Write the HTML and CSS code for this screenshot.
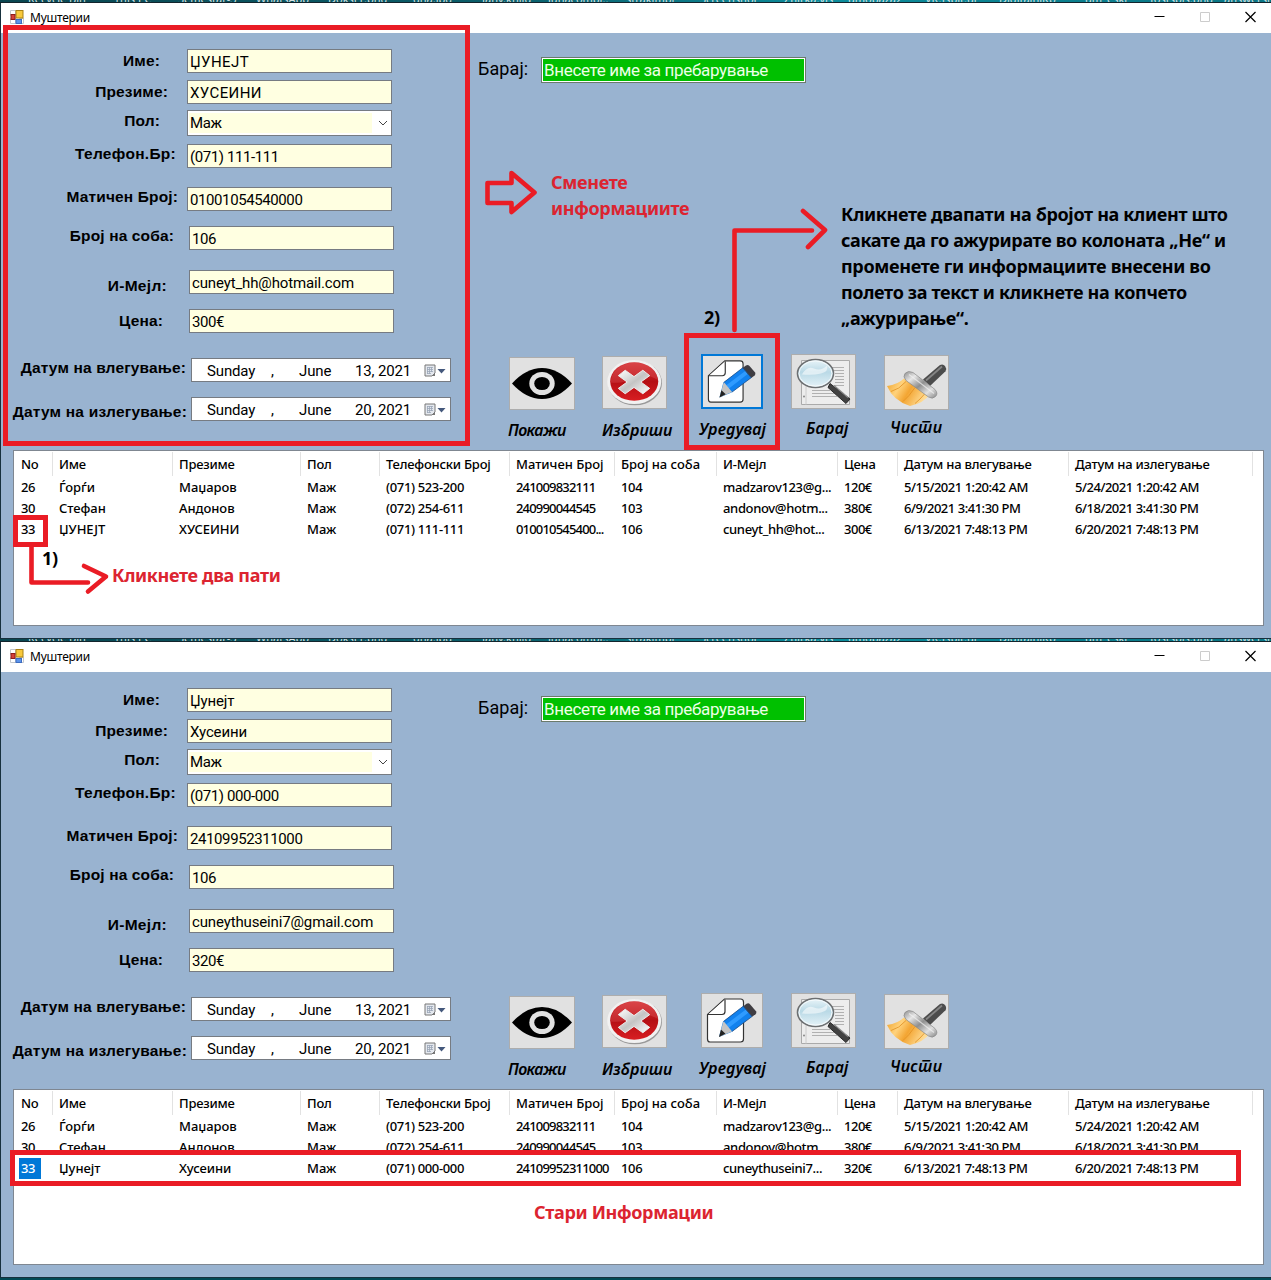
FILE: index.html
```
<!DOCTYPE html>
<html lang="mk">
<head>
<meta charset="utf-8">
<title>Муштерии</title>
<link rel="stylesheet" href="styles.css">
</head>
<body>
<svg class="defs" width="0" height="0" aria-hidden="true">
  <defs>
    <linearGradient id="silver" x1="0" y1="0" x2="1" y2="1"><stop offset="0" stop-color="#fff"/><stop offset=".5" stop-color="#c4c4c4"/><stop offset="1" stop-color="#fff"/></linearGradient>
    <linearGradient id="red" x1="0" y1="0" x2="0" y2="1"><stop offset="0" stop-color="#d63a3e"/><stop offset=".5" stop-color="#b50f14"/><stop offset="1" stop-color="#d81e22"/></linearGradient>
    <linearGradient id="glass" x1="0" y1="0" x2="0" y2="1"><stop offset="0" stop-color="#eaf5f9"/><stop offset=".45" stop-color="#b9d9e6"/><stop offset="1" stop-color="#e6f3f8"/></linearGradient>
    <linearGradient id="bristle" x1="0" y1="0" x2="1" y2=".4"><stop offset="0" stop-color="#ef9f22"/><stop offset=".35" stop-color="#ffd27c"/><stop offset=".6" stop-color="#f3a532"/><stop offset="1" stop-color="#ffdc95"/></linearGradient>
    <linearGradient id="steel" x1="0" y1="0" x2="1" y2="1"><stop offset="0" stop-color="#8c8c8c"/><stop offset=".25" stop-color="#e6e6e6"/><stop offset=".5" stop-color="#8f8f8f"/><stop offset=".75" stop-color="#e0e0e0"/><stop offset="1" stop-color="#868686"/></linearGradient>
  </defs>
  <symbol id="app" viewBox="0 0 14 14">
    <path d="M.5.5h5v5h-5zM.5 8.5h5v5h-5zM9.500 8.500h4v5h-4z" fill="#fff" stroke="#c3c7cc"/>
    <rect x="6" y=".5" width="7" height="7.500" fill="#f8c93c" stroke="#a98113"/>
    <rect x="1" y="4.500" width="4" height="5" fill="#d4403a" stroke="#8e1c18"/>
    <rect x="6" y="9.500" width="5.500" height="4" fill="#5b93ea" stroke="#3d6cc0"/>
  </symbol>
  <symbol id="calendar" viewBox="0 0 22 13">
    <path d="M1 1h10v8l-3 3H1z" fill="#e4e8ee" stroke="#777"/>
    <path d="M3 3.500h6M3 5.500h6M3 7.500h6M3 9.500h4M3.500 3v7M5.500 3v7M7.500 3v5" stroke="#9aa6b8" stroke-width=".8"/>
    <path d="M11 9v3H8z" fill="#777"/>
    <path d="M13.500 5h8L17.500 9.500z" fill="#44587c"/>
  </symbol>
  <symbol id="eye" viewBox="0 0 64 51">
    <path d="M2 25.500Q16 10 32 10T62 25.500Q48 41 32 41T2 25.500z"/>
    <ellipse cx="32" cy="25.500" rx="12.700" ry="11.500" fill="#e1e1e1"/>
    <ellipse cx="32" cy="25.500" rx="7.800" ry="6.600"/>
  </symbol>
  <symbol id="remove" viewBox="0 0 64 52">
    <ellipse cx="32.500" cy="26.500" rx="27.500" ry="22.800" fill="#999"/>
    <ellipse cx="31.700" cy="25.500" rx="27.500" ry="22.500" fill="#f1f1f1"/>
    <ellipse cx="31.700" cy="25" rx="24.500" ry="19.700" fill="url(#red)"/>
    <path d="M7.500 26Q9 8 32 5.500q21 1 24 18-14-8-24-2T7.500 26z" fill="#e2595c" opacity=".35"/>
    <path d="M22.500 13.500l9 6.500 9-6.500 7 5.500-9 6.500 9 6.500-7 5.500-9-6.500-9 6.500-7-5.500 9-6.500-9-6.500z" fill="url(#silver)" stroke="#ececec" stroke-linejoin="round"/>
  </symbol>
  <symbol id="edit" viewBox="0 0 60 53">
    <path d="M22.500 5h16q3 0 3 3v37q0 3-3 3H8q-2.500 0-2.500-3V20.500z" fill="#fff" stroke="#333" stroke-width="1.200"/>
    <path d="M23 5.500v12q0 3-3 3H6" fill="#fff" stroke="#333" stroke-width="1.200"/>
    <path d="M17 43l4-15.500L41.500 12l8.500 10.500L29.500 38z" fill="#1181ee"/>
    <path d="M24 30.500L44.500 15l2.500 3.200L26.500 34z" fill="#2f9bff"/>
    <path d="M17 43l4.500-16 8.500 10.500z" fill="#c4c4c4"/>
    <path d="M17 43l2-7.500 4.500 4.300z" fill="#222"/>
    <path d="M41 12.500l3.500-2.700q2-1.300 3.700.6l5.800 6.800q1 1.800-.5 3L50 22.800z" fill="#3f3d42"/>
    <path d="M21.500 27.500L41.500 12 50 22.500 30 37.500" fill="none" stroke="#1e4e86" stroke-width=".8"/>
  </symbol>
  <symbol id="find" viewBox="0 0 63 52">
    <path d="M9.500 5h48v44h-48z" fill="#ededed" stroke="#aaa"/>
    <path d="M14 6v43" stroke="#ccc"/>
    <path d="M38 12h14M42 15h10M43 18h9M43 21h9M43 24h9M43 27h9M42 30h10M20 35h18M20 38h22M20 41h25" stroke="#aaa" stroke-width=".9"/>
    <circle cx="12" cy="41" r="1" fill="#888"/>
    <path d="M38 28l20 15.500-4 4.500-18-16z" fill="#414141" stroke="#292929" stroke-linejoin="round"/>
    <path d="M42 30l14 12" stroke="#8a8a8a" stroke-width="1.200"/>
    <ellipse cx="23.500" cy="18" rx="18" ry="14" fill="url(#glass)" stroke="#6d6f71" stroke-width="1.600"/>
    <ellipse cx="23.500" cy="18" rx="16.500" ry="12.600" fill="none" stroke="#f6fbfd"/>
    <path d="M10 19q5-9 12-6t13-3q2 6-6 8t-19 1z" fill="#fff" opacity=".55"/>
  </symbol>
  <symbol id="broom" viewBox="0 0 63 52">
    <path d="M38 23L55 8.500q3-1.500 5 1t.5 5.200L45 29.500z" fill="#4c4c4c"/>
    <path d="M41 24L57 10" stroke="#858585" stroke-width="1.800"/>
    <path d="M19 22Q13 28 2 29.500 8 44 25 49.500q14-3 20-12z" fill="url(#bristle)"/>
    <path d="M21 25Q14 33 6 35M30 31q-6 9-12 14M40 37q-5 6-10 10" fill="none" stroke="#e08f22" stroke-width=".8"/>
    <path d="M20 17q3-3.500 8-1l22 17q3.500 4 .5 7t-7 .5L21 24q-3.500-4-1-7z" fill="url(#steel)" stroke="#888" stroke-width=".7"/>
    <path d="M24 18l25 19" stroke="#f2f2f2" stroke-width="1.200" opacity=".7"/>
  </symbol>
  <symbol id="captions" viewBox="0 0 104 12">
    <path d="M.5 5.500h10" stroke="#000"/>
    <path d="M46.500 1.500h9v9h-9z" fill="none" stroke="#ccc"/>
    <path d="M91.500 1l10 10M101.500 1l-10 10" stroke="#000" stroke-width="1.200"/>
  </symbol>
</svg>

<main class="desktop">
  <section class="window">
    <div class="wallpaper"><span>Recycle Bin</span><span>This PC</span><span>Semestar-3</span><span>WhatsApp</span><span>Dokst1.png</span><span>dna.jpg</span><span>Janv.knjig</span><span>junacompl..</span><span>strakimpl</span><span>Screenshot</span><span>Znirka.vis</span><span>umobaza2</span><span>VR.Ispit.ui</span><span>DigitalniKp</span><span>um_eski</span><span>fostsbls.png</span><span>answersn</span></div>
    <header class="titlebar"><svg class="app-icon"><use href="#app"/></svg><span class="title">Муштерии</span><svg class="captions"><use href="#captions"/></svg></header>
    <div class="client">
      <div class="top">
        <div class="form">
          <div class="row r-name"><label>Име:</label><div class="input caps">ЏУНЕЈТ</div></div>
          <div class="row r-surname"><label>Презиме:</label><div class="input caps">ХУСЕИНИ</div></div>
          <div class="row r-sex"><label>Пол:</label><div class="input combo"><span>Маж</span><svg viewBox="0 0 10 6"><path d="M1 1l4 4 4-4" fill="none" stroke="#444"/></svg></div></div>
          <div class="row r-phone"><label>Телефон.Бр:</label><div class="input digits">(071) 111-111</div></div>
          <div class="row r-id"><label>Матичен Број:</label><div class="input digits">01001054540000</div></div>
          <div class="row r-room"><label>Број на соба:</label><div class="input digits">106</div></div>
          <div class="row r-mail"><label>И-Мејл:</label><div class="input">cuneyt_hh@hotmail.com</div></div>
          <div class="row r-price"><label>Цена:</label><div class="input digits">300€</div></div>
          <div class="row r-in"><label>Датум на влегување:</label><div class="date"><span>Sunday</span><span>,</span><span>June</span><span>13, 2021</span><svg><use href="#calendar"/></svg></div></div>
          <div class="row r-out"><label>Датум на излегување:</label><div class="date"><span>Sunday</span><span>,</span><span>June</span><span>20, 2021</span><svg><use href="#calendar"/></svg></div></div>
        </div>
        <div class="side">
          <div class="search"><label>Барај:</label><div class="query">Внесете име за пребарување</div></div>
          <div class="tools">
            <div class="tool t-show"><div class="btn"><svg><use href="#eye"/></svg></div><span>Покажи</span></div>
            <div class="tool t-delete"><div class="btn"><svg><use href="#remove"/></svg></div><span>Избриши</span></div>
            <div class="tool t-edit"><div class="btn focused"><svg><use href="#edit"/></svg></div><span>Уредувај</span></div>
            <div class="tool t-find"><div class="btn"><svg><use href="#find"/></svg></div><span>Барај</span></div>
            <div class="tool t-clear"><div class="btn"><svg><use href="#broom"/></svg></div><span>Чисти</span></div>
          </div>
        </div>
      </div>
      <div class="list">
        <div class="line head"><span>No</span><span>Име</span><span>Презиме</span><span>Пол</span><span>Телефонски Број</span><span>Матичен Број</span><span>Број на соба</span><span>И-Мејл</span><span>Цена</span><span>Датум на влегување</span><span>Датум на излегување</span></div>
        <div class="line"><span>26</span><span>Ѓорѓи</span><span>Маџаров</span><span>Маж</span><span>(071) 523-200</span><span>241009832111</span><span>104</span><span>madzarov123@g...</span><span>120€</span><span>5/15/2021 1:20:42 AM</span><span>5/24/2021 1:20:42 AM</span></div>
        <div class="line"><span>30</span><span>Стефан</span><span>Андонов</span><span>Маж</span><span>(072) 254-611</span><span>240990044545</span><span>103</span><span>andonov@hotm...</span><span>380€</span><span>6/9/2021 3:41:30 PM</span><span>6/18/2021 3:41:30 PM</span></div>
        <div class="line"><span>33</span><span>ЏУНЕЈТ</span><span>ХУСЕИНИ</span><span>Маж</span><span>(071) 111-111</span><span>010010545400...</span><span>106</span><span>cuneyt_hh@hot...</span><span>300€</span><span>6/13/2021 7:48:13 PM</span><span>6/20/2021 7:48:13 PM</span></div>
      </div>
    </div>
    <svg class="marks" viewBox="0 0 1271 639">
      <g fill="none" stroke="#ea1c25" stroke-width="5">
        <path d="M5.500 27.500h462v416H5.500zM686.500 335.500h91v112h-91zM15.500 517.500h30v27h-30z"/>
        <g stroke-linejoin="round" stroke-linecap="round">
          <path d="M487.500 183h24v-10L534.500 192.500 511.500 212v-9h-24z" stroke-width="4.600"/>
          <path d="M734.500 330V230.500H812M803 211l22 19-17 17" stroke-width="4.600"/>
          <path d="M31.500 547v35.500H88M84 566l22 10.500L88 591.500" stroke-width="4.600"/>
        </g>
      </g>
    </svg>
    <p class="note red n-change">Сменете<br>информациите</p>
    <p class="note n-help">Кликнете двапати на бројот на клиент што<br>сакате да го ажурирате во колоната „Не“ и<br>променете ги информациите внесени во<br>полето за текст и кликнете на копчето<br>„ажурирање“.</p>
    <p class="note n-two">2)</p>
    <p class="note n-one">1)</p>
    <p class="note red n-click">Кликнете два пати</p>
  </section>

  <section class="window">
    <div class="wallpaper"><span>Recycle Bin</span><span>This PC</span><span>Semestar-3</span><span>WhatsApp</span><span>Dokst1.png</span><span>dna.jpg</span><span>Janv.knjig</span><span>junacompl..</span><span>strakimpl</span><span>Screenshot</span><span>Znirka.vis</span><span>umobaza2</span><span>VR.Ispit.ui</span><span>DigitalniKp</span><span>um_eski</span><span>fostsbls.png</span><span>answersn</span></div>
    <header class="titlebar"><svg class="app-icon"><use href="#app"/></svg><span class="title">Муштерии</span><svg class="captions"><use href="#captions"/></svg></header>
    <div class="client">
      <div class="top">
        <div class="form">
          <div class="row r-name"><label>Име:</label><div class="input">Џунејт</div></div>
          <div class="row r-surname"><label>Презиме:</label><div class="input">Хусеини</div></div>
          <div class="row r-sex"><label>Пол:</label><div class="input combo"><span>Маж</span><svg viewBox="0 0 10 6"><path d="M1 1l4 4 4-4" fill="none" stroke="#444"/></svg></div></div>
          <div class="row r-phone"><label>Телефон.Бр:</label><div class="input digits">(071) 000-000</div></div>
          <div class="row r-id"><label>Матичен Број:</label><div class="input digits">24109952311000</div></div>
          <div class="row r-room"><label>Број на соба:</label><div class="input digits">106</div></div>
          <div class="row r-mail"><label>И-Мејл:</label><div class="input">cuneythuseini7@gmail.com</div></div>
          <div class="row r-price"><label>Цена:</label><div class="input digits">320€</div></div>
          <div class="row r-in"><label>Датум на влегување:</label><div class="date"><span>Sunday</span><span>,</span><span>June</span><span>13, 2021</span><svg><use href="#calendar"/></svg></div></div>
          <div class="row r-out"><label>Датум на излегување:</label><div class="date"><span>Sunday</span><span>,</span><span>June</span><span>20, 2021</span><svg><use href="#calendar"/></svg></div></div>
        </div>
        <div class="side">
          <div class="search"><label>Барај:</label><div class="query">Внесете име за пребарување</div></div>
          <div class="tools">
            <div class="tool t-show"><div class="btn"><svg><use href="#eye"/></svg></div><span>Покажи</span></div>
            <div class="tool t-delete"><div class="btn"><svg><use href="#remove"/></svg></div><span>Избриши</span></div>
            <div class="tool t-edit"><div class="btn"><svg><use href="#edit"/></svg></div><span>Уредувај</span></div>
            <div class="tool t-find"><div class="btn"><svg><use href="#find"/></svg></div><span>Барај</span></div>
            <div class="tool t-clear"><div class="btn"><svg><use href="#broom"/></svg></div><span>Чисти</span></div>
          </div>
        </div>
      </div>
      <div class="list">
        <div class="line head"><span>No</span><span>Име</span><span>Презиме</span><span>Пол</span><span>Телефонски Број</span><span>Матичен Број</span><span>Број на соба</span><span>И-Мејл</span><span>Цена</span><span>Датум на влегување</span><span>Датум на излегување</span></div>
        <div class="line"><span>26</span><span>Ѓорѓи</span><span>Маџаров</span><span>Маж</span><span>(071) 523-200</span><span>241009832111</span><span>104</span><span>madzarov123@g...</span><span>120€</span><span>5/15/2021 1:20:42 AM</span><span>5/24/2021 1:20:42 AM</span></div>
        <div class="line"><span>30</span><span>Стефан</span><span>Андонов</span><span>Маж</span><span>(072) 254-611</span><span>240990044545</span><span>103</span><span>andonov@hotm...</span><span>380€</span><span>6/9/2021 3:41:30 PM</span><span>6/18/2021 3:41:30 PM</span></div>
        <div class="line"><span><b class="selected">33</b></span><span>Џунејт</span><span>Хусеини</span><span>Маж</span><span>(071) 000-000</span><span>24109952311000</span><span>106</span><span>cuneythuseini7...</span><span>320€</span><span>6/13/2021 7:48:13 PM</span><span>6/20/2021 7:48:13 PM</span></div>
      </div>
    </div>
    <svg class="marks" viewBox="0 0 1271 639"><path d="M12.500 513.500h1226v31H12.500z" fill="none" stroke="#ea1c25" stroke-width="5"/></svg>
    <p class="note red n-old">Стари Информации</p>
  </section>
</main>
</body>
</html>
```
FILE: styles.css
```
* { box-sizing: border-box; }
body { margin: 0; background: #024a55; color: #000; font-feature-settings: "locl" 0; }
.defs { position: absolute; }
svg { display: block; flex: none; }
.desktop { width: 1271px; height: 1280px; overflow: hidden; }

.window { position: relative; height: 639px; padding-left: 1px; background: #17303d; }
.wallpaper {
  display: grid; grid-template-columns: 86px 64px 78px 72px 85px 69px 66px 78px 74px 84px 64px 77px 74px 86px 65px 74px 47px;
  height: 3px; margin-left: -1px; padding-left: 28px;
  overflow: hidden; background: linear-gradient(90deg, #0a4650, #0b5f6b 40%, #0d8d9c 65%, #0a7482);
  border-bottom: 1px solid #12242c;
  font: 11px/3px "Noto Sans", sans-serif; color: #d5e2e4; white-space: nowrap;
}
.wallpaper span { margin-top: -3px; }
.titlebar { display: flex; align-items: center; height: 30px; padding: 0 13px 0 9px; background: #fff; }
.app-icon { width: 14px; height: 14px; margin-bottom: 2px; }
.title { flex: 1; margin-left: 6px; font: 12px/16px "Noto Sans", sans-serif; letter-spacing: -.25px; }
.captions { width: 104px; height: 12px; margin-bottom: 2px; }

.client { height: 605px; background: #99b3d0; }
.top { display: flex; height: 417px; }

/* Customer form */
.form { width: 477px; padding-top: 16px; font: 15px/16px Roboto, sans-serif; }
.row { display: flex; align-items: center; height: 24px; }
.row label {
  flex: none; width: 186px; text-align: right; white-space: nowrap;
  font: bold 15.5px/16px "Liberation Sans", sans-serif; letter-spacing: .14px;
}
.input {
  width: 205px; height: 24px; padding: 1px 2px 0; border: 1px solid #767b82;
  background: #ffffe1; line-height: 22px; letter-spacing: -.14px;
}
.caps { letter-spacing: .4px; }
.digits { letter-spacing: -.4px; }
.combo { display: flex; align-items: center; height: 26px; padding: 1px 4px 1px 1px; background: #fff; }
.combo span { flex: 1; height: 20px; margin-right: 6px; padding-left: 1px; background: #ffffe1; line-height: 21px; letter-spacing: -.4px; }
.combo svg { width: 10px; height: 6px; margin-right: -1px; }
.r-name label { padding-right: 27px; }
.r-surname { margin-top: 7px; }
.r-surname label { padding: 0 19px 1px 0; }
.r-sex { height: 26px; margin-top: 6px; }
.r-sex label { padding: 0 27px 5px 0; }
.r-phone { margin-top: 8px; }
.r-phone label { padding: 0 11px 4px 0; letter-spacing: .28px; }
.r-id { margin-top: 19px; }
.r-id label { padding: 0 9px 5px 0; }
.r-room { margin-top: 15px; }
.r-room label { width: 188px; padding: 0 15px 5px 0; }
.r-mail { margin-top: 20px; }
.r-mail label { width: 188px; padding: 7px 22px 0 0; letter-spacing: .3px; }
.r-price { margin-top: 15px; }
.r-price label { width: 188px; padding-right: 26px; }
.r-in { margin-top: 25px; }
.r-in label { width: 190px; padding: 0 5px 5px 0; }
.r-out { margin-top: 15px; }
.r-out label { width: 190px; padding: 6px 4px 0 0; letter-spacing: .2px; }
.date {
  display: grid; grid-template-columns: 64px 28px 56px 69px 22px; align-items: center;
  width: 260px; height: 24px; padding-left: 15px; border: 1px solid #767b82; background: #fff;
  line-height: 22px; letter-spacing: -.15px; padding-top: 1px;
}
.date svg { width: 22px; height: 13px; margin-top: -2px; }

/* Search box and tool buttons */
.side { flex: 1; }
.search { display: flex; align-items: center; height: 26px; margin-top: 24px; font: 17px/22px Roboto, sans-serif; }
.search label { width: 63px; padding-bottom: 2px; font-size: 18px; letter-spacing: .1px; }
.query {
  width: 265px; height: 26px; padding: 1px 2px; border: 1px solid #6b7a6b; box-shadow: inset 0 0 0 1px #fff;
  background: #00c000; color: #ecffe6; line-height: 23px; letter-spacing: -.34px;
}
.tools { display: flex; align-items: flex-start; margin: 271px 0 0 30px; }
.tool { flex: none; font: italic 600 16px/20px "Noto Sans", sans-serif; white-space: nowrap; }
.tool span { display: block; }
.btn { border: 1px solid #adadad; background: #e1e1e1; }
.btn svg { width: 100%; height: 100%; }
.focused { border: 2px solid #0078d7; }
.t-show { width: 94px; padding-top: 3px; letter-spacing: -.6px; }
.t-show .btn { width: 66px; height: 53px; margin-left: 1px; }
.t-show span { margin-top: 10px; }
.t-delete { width: 97px; padding-top: 2px; }
.t-delete .btn { width: 65px; height: 53px; }
.t-delete span { margin-top: 11px; }
.t-edit { width: 92px; letter-spacing: .1px; }
.t-edit .btn { width: 62px; height: 55px; margin-left: 2px; }
.t-edit span { margin: 10px 0 0 0; }
.t-find { width: 93px; letter-spacing: .25px; }
.t-find .btn { width: 65px; height: 55px; }
.t-find span { margin: 9px 0 0 15px; }
.t-clear { padding-top: 1px; letter-spacing: .3px; }
.t-clear .btn { width: 65px; height: 55px; }
.t-clear span { margin: 7px 0 0 6px; }

/* Customer list */
.list {
  width: 1251px; height: 176px; margin-left: 12px; border: 1px solid #7f8791; background: #fff;
  font: 500 13px/21px "Noto Sans", sans-serif;
}
.line {
  display: grid; grid-template-columns: 39px 120px 128px 79px 130px 105px 102px 121px 60px 171px 184px;
  height: 21px; white-space: nowrap;
}
.line span { padding-left: 6px; letter-spacing: -.05px; }
.line span:first-child { padding-left: 7px; }
.line span:nth-child(n+5), .line span:first-child { letter-spacing: -.35px; }
.line span:nth-child(n+9) { letter-spacing: -.48px; }
.line span:nth-child(6) { letter-spacing: -.82px; }
.head { height: 26px; padding-top: 1px; line-height: 25px; }
.head span { height: 24px; border-right: 1px solid #e2e2e2; }
.head span:nth-child(n) { letter-spacing: -.22px; }
.head span:nth-child(6), .head span:nth-child(7) { letter-spacing: -.02px; }
.selected { display: block; width: 22px; margin-left: -2px; padding-left: 2px; background: #0078d7; color: #fff; font-weight: 500; }

/* Tutorial annotations drawn over the windows */
.marks { position: absolute; left: 0; top: 0; width: 1271px; height: 639px; }
.note { position: absolute; margin: 0; font: bold 18px/26px "Noto Sans", sans-serif; letter-spacing: -.34px; white-space: nowrap; }
.red { color: #dc2430; }
.n-change { left: 551px; top: 169px; }
.n-help { left: 841px; top: 201px; }
.n-two { left: 704px; top: 304px; }
.n-one { left: 42px; top: 545px; }
.n-click { left: 112px; top: 562px; }
.n-old { left: 534px; top: 560px; }
```
